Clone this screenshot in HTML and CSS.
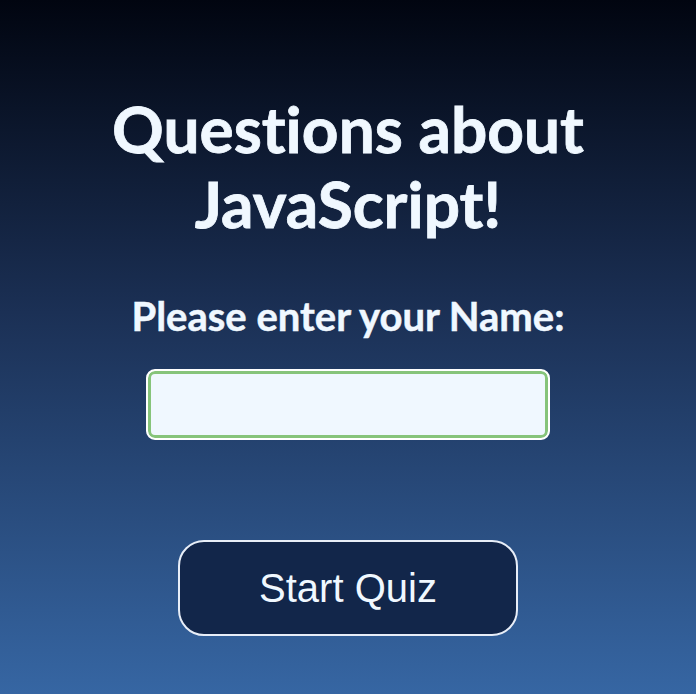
FILE: index.html
```html
<!DOCTYPE html>
<html>
<head>
<meta charset="utf-8">
<link rel="stylesheet" href="styles.css">
</head>
<body>
<main class="quiz">
  <h1 class="title">Questions about JavaScript!</h1>
  <label class="label" for="name">Please enter your Name:</label>
  <input class="name-input" id="name" type="text">
  <button class="start-btn">Start Quiz</button>
</main>
</body>
</html>
```
FILE: styles.css
```css
html, body {
  margin: 0;
  padding: 0;
  height: 100%;
}
body {
  background: linear-gradient(to bottom, #010510 0%, #1b3055 45%, #3666a3 100%);
  font-family: Lato, "Noto Sans", sans-serif;
  color: #f0f8ff;
  font-variant-ligatures: none;
}
.quiz {
  display: flex;
  flex-direction: column;
  align-items: center;
  padding-top: 91px;
}
.title {
  margin: 0;
  width: 540px;
  text-align: center;
  font-size: 64px;
  line-height: 75px;
  font-weight: 700;
  -webkit-text-stroke: 0.8px #f0f8ff;
}
.label {
  margin-top: 51px;
  font-size: 40px;
  font-weight: 700;
  -webkit-text-stroke: 0.5px #f0f8ff;
}
.name-input {
  margin-top: 29px;
  box-sizing: border-box;
  width: 404px;
  height: 71px;
  background: #f0f8ff;
  border: 2px solid #ffffff;
  border-radius: 9px;
  box-shadow: inset 0 0 0 3px #86c47a;
  outline: none;
}
.start-btn {
  margin-top: 100px;
  box-sizing: border-box;
  width: 340px;
  height: 96px;
  background: #12264a;
  color: #f0f8ff;
  border: 2px solid #e8eef8;
  border-radius: 26px;
  font-family: "Liberation Sans", Arial, sans-serif;
  font-size: 40px;
}
```
